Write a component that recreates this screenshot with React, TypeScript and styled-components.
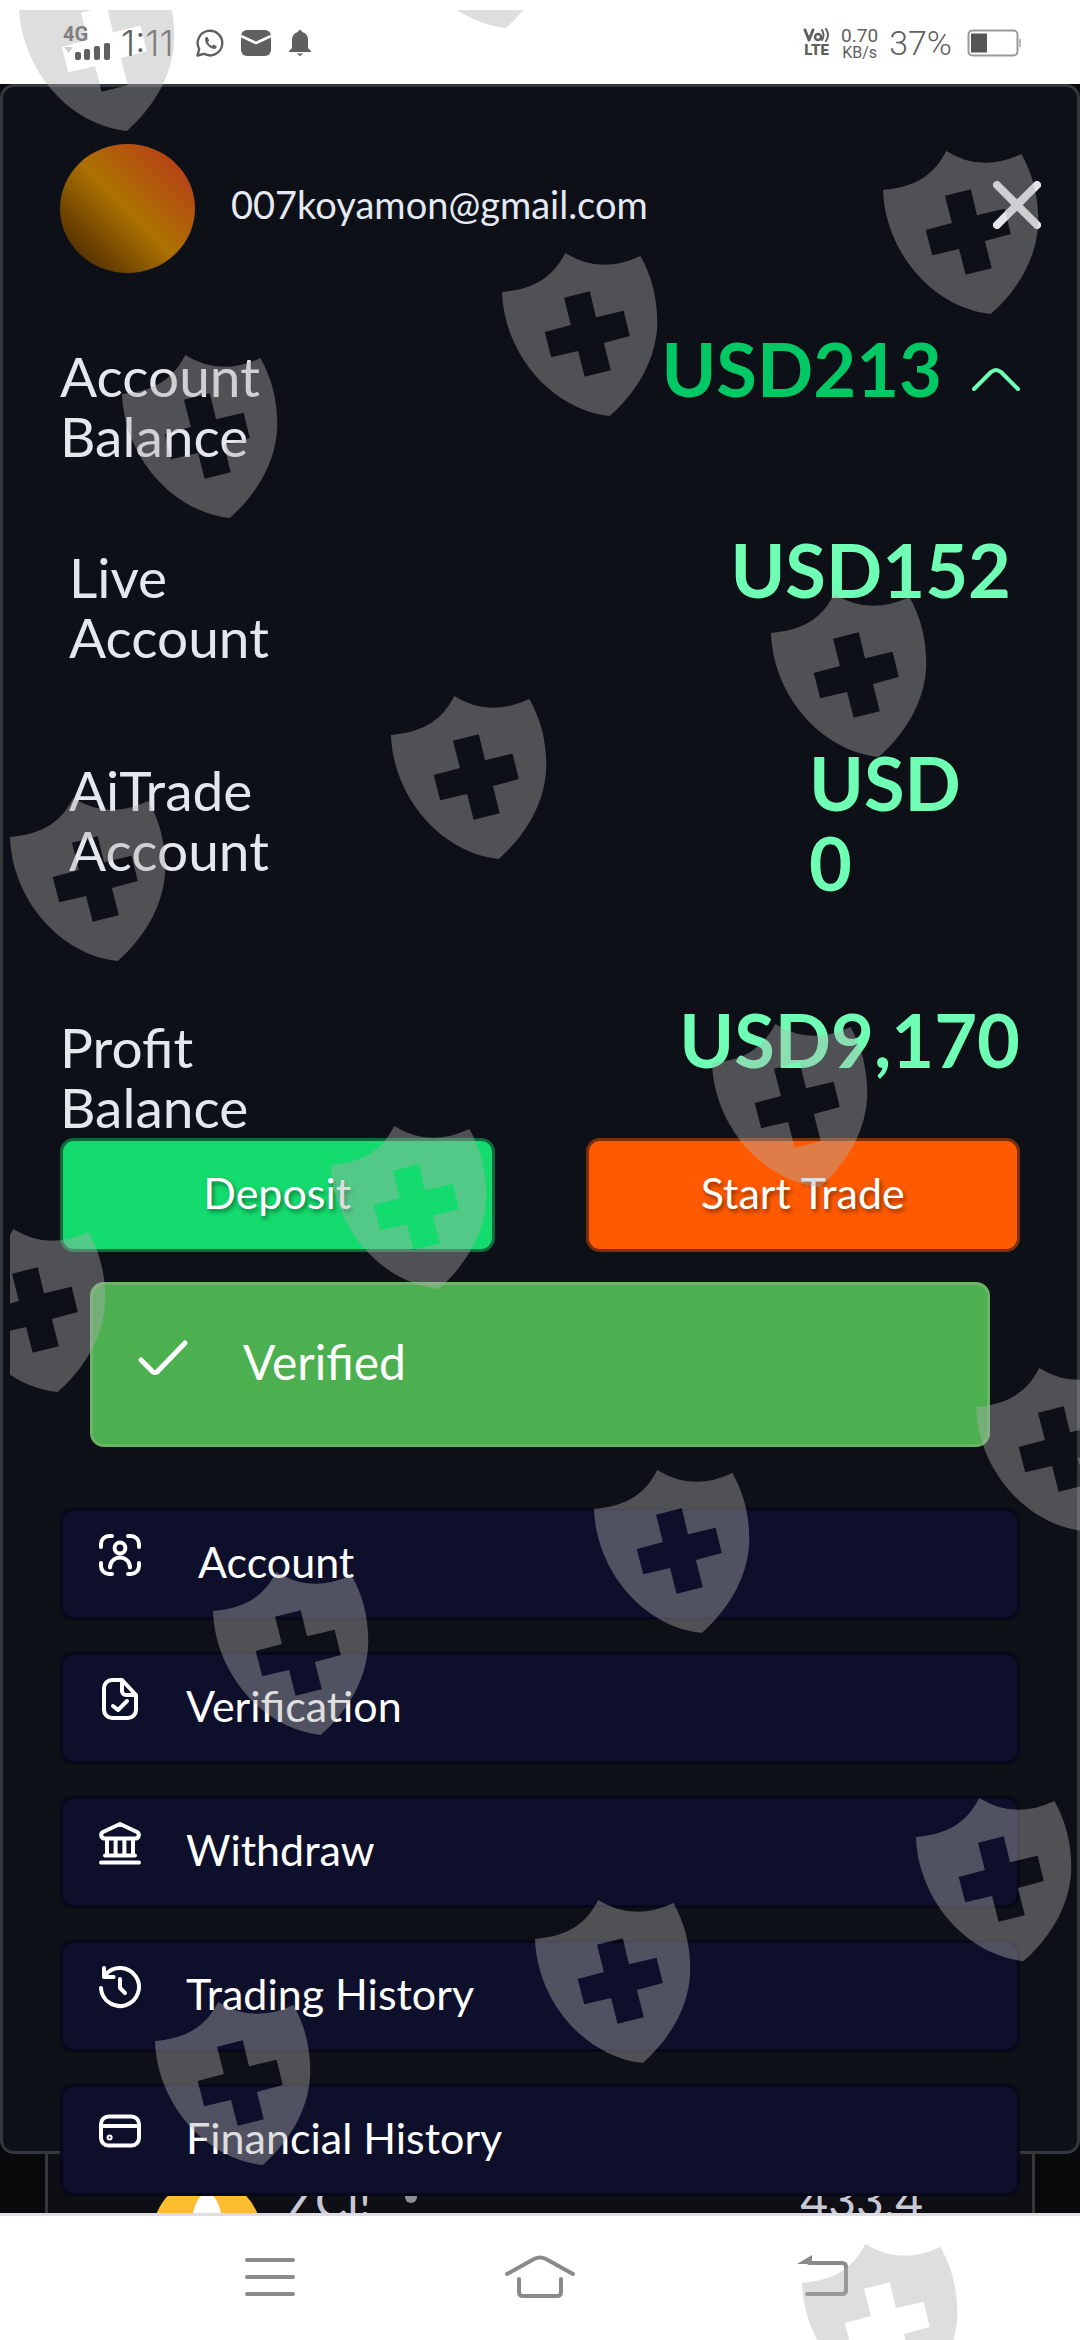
import React from 'react';
import styled, { createGlobalStyle, css } from 'styled-components';

const GlobalStyle = createGlobalStyle`
  *, *::before, *::after { box-sizing: border-box; }
  body { margin: 0; background: #0a0c0f; }
  button { font: inherit; color: inherit; cursor: pointer; }
`;

const Screen = styled.div`
  position: relative;
  display: flex;
  flex-direction: column;
  min-height: 100vh;
  overflow: hidden;
  font-family: Lato, 'Open Sans', sans-serif;
  color: #e4e7ec;
`;

/* ---------- status bar ---------- */

const StatusBar = styled.header`
  display: flex;
  align-items: center;
  justify-content: space-between;
  height: 84px;
  padding: 2px 58px 0 63px;
  background: #fff;
  color: #606060;
  font-family: Roboto, sans-serif;
`;

const StatusGroup = styled.div<{ $gap: number }>`
  display: flex;
  align-items: center;
  gap: ${(p) => p.$gap}px;
`;

const Network = styled.div`
  display: flex;
  flex-direction: column;
  font-size: 20px;
  font-weight: 700;
  line-height: 18px;
  width: 48px;
`;

const Clock = styled.span`
  width: 64px;
  font-family: Inter, sans-serif;
  font-size: 36px;
  font-weight: 300;
  line-height: 40px;
`;

const Charge = styled.span`
  margin-right: 4px;
  font-size: 34px;
  font-weight: 300;
  line-height: 40px;
`;

const Stacked = styled.span<{ $bold?: boolean }>`
  display: flex;
  flex-direction: column;
  align-items: center;
  font-size: 19px;
  line-height: 19px;
  ${(p) => p.$bold && css`
    font-size: 15px;
    font-weight: 900;
    line-height: 16px;
  `}
`;

const Smaller = styled.span`
  font-size: 16px;
  line-height: 16px;
`;

/* ---------- page behind the drawer ---------- */

const Stage = styled.main`
  flex: 1;
  display: grid;
  grid-template-columns: 100%;
  overflow: hidden;
  background: #07090b;
`;

const Backdrop = styled.section`
  grid-area: 1 / 1;
  display: flex;
  flex-direction: column;
  justify-content: flex-end;
  margin: 0 45px;
  border: solid #33363b;
  border-width: 0 3px;
  background: #0d0f15;
`;

const CoinRow = styled.div`
  display: flex;
  align-items: flex-start;
  height: 115px;
  margin-bottom: -74px;
  padding: 0 109px 0 105px;
  font-size: 48px;
  line-height: 56px;
  color: #c9c9d6;

  svg { margin-top: 7px; }
`;

const CoinName = styled.span`
  margin: 0 34px 0 26px;
`;

const CoinDot = styled.span`
  width: 12px;
  height: 12px;
  margin: 19px auto 0 0;
  border-radius: 50%;
  background: #8d8f96;
`;

/* ---------- drawer ---------- */

const Drawer = styled.aside`
  grid-area: 1 / 1;
  align-self: start;
  display: flex;
  flex-direction: column;
  padding: 57px 57px 0;
  border: 3px solid #33383d;
  border-radius: 14px;
  background: #0d1017;
`;

const Profile = styled.div`
  display: flex;
  align-items: center;
  height: 129px;
`;

const Avatar = styled.div`
  width: 135px;
  height: 129px;
  border-radius: 50%;
  background: linear-gradient(45deg, #4f2c00 10%, #ad7200 50%, #b8321f 100%);
`;

const Email = styled.span`
  flex: 1;
  margin: 0 0 9px 36px;
  font-size: 38px;
  line-height: 44px;
  color: #e4e9f3;
`;

const IconButton = styled.button`
  display: flex;
  padding: 0;
  border: 0;
  background: none;
`;

const CloseButton = styled(IconButton)`
  margin: 0 -21px 7px 0;
`;

const Balances = styled.dl`
  display: flex;
  flex-direction: column;
  margin: 56px 0 0;
`;

const Balance = styled.div<{ $gap?: number; $inset?: boolean }>`
  display: flex;
  justify-content: space-between;
  margin-bottom: ${(p) => p.$gap ?? 0}px;
  padding: 0 ${(p) => (p.$inset ? 9 : 0)}px;
`;

const BalanceLabel = styled.dt`
  width: 220px;
  padding-top: 17px;
  font-size: 55px;
  line-height: 60px;
`;

const Amount = styled.dd<{ $strong?: boolean; $narrow?: boolean }>`
  display: flex;
  gap: 30px;
  margin: 0;
  font-size: 74px;
  font-weight: 700;
  line-height: 80px;
  color: ${(p) => (p.$strong ? '#00c864' : '#6fffb4')};
  ${(p) => p.$narrow && css`
    width: 202px;
  `}
`;

const ToggleButton = styled(IconButton)`
  align-items: center;
  align-self: center;
  margin-bottom: 38px;
  height: 24px;
`;

const Actions = styled.div`
  display: flex;
  gap: 91px;
  margin-top: 1px;
`;

const Action = styled.button<{ $fill: string; $edge: string }>`
  flex: 1;
  height: 114px;
  padding: 0 0 4px;
  border: 3px solid ${(p) => p.$edge};
  border-radius: 14px;
  background: ${(p) => p.$fill};
  font-size: 43px;
  line-height: 50px;
  color: #fff;
  text-shadow: 2px 3px 4px rgba(0, 0, 0, 0.45);
`;

const Verified = styled.div`
  display: flex;
  align-items: center;
  gap: 54px;
  height: 165px;
  margin: 30px 30px 61px;
  padding: 0 44px 5px;
  border: 3px solid #69b565;
  border-radius: 14px;
  background: #4cb050;
  font-size: 48px;
  line-height: 56px;
  color: #fff;
`;

const Menu = styled.nav`
  display: flex;
  flex-direction: column;
  gap: 32px;
  margin-bottom: -45px;
`;

const MenuItem = styled.button<{ $indent?: boolean }>`
  display: flex;
  align-items: center;
  gap: ${(p) => (p.$indent ? 54 : 42)}px;
  height: 112px;
  padding: 0 33px 4px;
  border: 3px solid #07071a;
  border-radius: 14px;
  background: #0e102b;
  font-size: 43px;
  line-height: 50px;
  color: #fff;

  svg { margin-bottom: 14px; }
`;

/* ---------- system navigation ---------- */

const SystemNav = styled.nav`
  display: flex;
  justify-content: center;
  height: 127px;
  border-top: 3px solid #dfdde4;
  background: #fff;
`;

const NavButton = styled(IconButton)`
  flex: 0 0 25%;
  align-items: center;
  justify-content: center;
  padding-bottom: 2px;
`;

/* ---------- floating shields ---------- */

const ShieldLayer = styled.div`
  position: absolute;
  inset: 10px 0 0 10px;
  overflow: hidden;
  pointer-events: none;
`;

const Shield = styled.svg<{ $x: number; $y: number }>`
  position: absolute;
  left: ${(p) => p.$x - 10}px;
  top: ${(p) => p.$y - 50}px;
  width: 156px;
  height: 166px;
`;

const shields: [number, number][] = [
  [19, 7], [398, -96],
  [883, 190], [502, 292], [122, 394],
  [771, 633], [391, 735], [10, 837],
  [712, 1063], [331, 1165], [-50, 1268],
  [976, 1407], [594, 1509], [213, 1611],
  [916, 1837], [535, 1939], [155, 2041],
  [802, 2283],
];

const line = {
  fill: 'none',
  stroke: 'currentColor',
  strokeWidth: 2,
  strokeLinecap: 'round' as const,
  strokeLinejoin: 'round' as const,
};

const MenuIcon = ({ children }: { children: React.ReactNode }) => (
  <svg width="48" height="48" viewBox="0 0 24 24" {...line} aria-hidden="true">{children}</svg>
);

const menu = [
  {
    label: 'Account',
    indent: true,
    icon: (
      <>
        <path d="M2.500 8V6.500a4 4 0 0 1 4-4H8M16 2.500h1.500a4 4 0 0 1 4 4V8M21.500 16v1.500a4 4 0 0 1-4 4H16M8 21.500H6.500a4 4 0 0 1-4-4V16" />
        <circle cx="12" cy="8.500" r="2.700" />
        <path d="M7 18.200a5 5 0 0 1 10 0" />
      </>
    ),
  },
  {
    label: 'Verification',
    icon: (
      <>
        <path d="M13 2.500H8A4 4 0 0 0 4 6.500v11a4 4 0 0 0 4 4h8a4 4 0 0 0 4-4V10zM13 2.500V8a2 2 0 0 0 2 2h5" />
        <path d="M8.500 15.500l2.500 2 4.500-4.500" />
      </>
    ),
  },
  {
    label: 'Withdraw',
    icon: (
      <>
        <path d="M12 2.500l8.500 4a1.700 1.700 0 0 1-.7 3.200H4.200a1.700 1.700 0 0 1-.7-3.200z" />
        <path d="M5.500 10v8M9.800 10v8M14.200 10v8M18.500 10v8M4.500 18.200h15M2.500 21.700h19" />
      </>
    ),
  },
  {
    label: 'Trading History',
    icon: (
      <>
        <path d="M4.800 5.800A9.500 9.500 0 1 1 2.500 12.500" />
        <path d="M4 2.500V7h4.800M12 8v4.500l2.500 2.500" />
      </>
    ),
  },
  {
    label: 'Financial History',
    icon: (
      <>
        <rect x="2.500" y="4.700" width="19" height="14.600" rx="3.800" />
        <path d="M3 9.500h18" />
        <circle cx="6.800" cy="15.300" r=".5" />
      </>
    ),
  },
];

export default function App() {
  return (
    <Screen>
      <GlobalStyle />

      <StatusBar>
        <StatusGroup $gap={10}>
          <Network>
            4G
            <svg width="48" height="18" viewBox="0 0 48 18" fill="#606060" aria-hidden="true">
              <path d="M1 4h9l-4.500 6z" fill="#cfcfcf" />
              <rect x="12" y="9" width="6" height="8" rx="2" />
              <rect x="21" y="6" width="6" height="11" rx="2" />
              <rect x="31" y="3" width="6" height="14" rx="2" />
              <rect x="41" y="0" width="6" height="17" rx="2" />
            </svg>
          </Network>
          <Clock>1:11</Clock>
          <StatusGroup $gap={16}>
            <svg width="30" height="30" viewBox="0 0 30 30" {...line} strokeWidth={2.4} aria-hidden="true">
              <path d="M2.500 27.500l1.700-6.500A12.300 12.300 0 1 1 9 25.800z" />
              <path d="M11 9c-3 2 1 11 8 12 2 0 3-2 2.500-3l-3-1.500-1.500 1.500c-2-.8-3.200-2-4-4l1.200-1.500L12.500 9z" fill="currentColor" stroke="none" />
            </svg>
            <svg width="30" height="26" viewBox="0 0 30 26" aria-hidden="true">
              <rect width="30" height="26" rx="6" fill="#606060" />
              <path d="M0 6l15 7 15-7" fill="none" stroke="#fff" strokeWidth="2.500" />
            </svg>
            <svg width="26" height="26" viewBox="-2 0 26 26" fill="#606060" aria-hidden="true">
              <path d="M11 0c1.500 0 2 1 2 2 4 1 6 4 6 8v8l3 3v1H0v-1l3-3v-8c0-4 2-7 6-8 0-1 .5-2 2-2zM7.500 23.500h7L11 26z" />
            </svg>
          </StatusGroup>
        </StatusGroup>
        <StatusGroup $gap={11}>
          <Stacked $bold>
            <svg width="27" height="14" viewBox="0 0 27 14" {...line} aria-hidden="true">
              <path d="M2 2l4 10 4-10" strokeWidth="3" />
              <circle cx="15" cy="9" r="3" strokeWidth="2.500" />
              <path d="M19 2q3 5 0 10M23 1q4 6 0 12" />
            </svg>
            <span>LTE</span>
          </Stacked>
          <Stacked>
            <span>0.70</span>
            <Smaller>KB/s</Smaller>
          </Stacked>
          <Charge>37%</Charge>
          <svg width="55" height="28" viewBox="0 0 55 28" aria-hidden="true">
            <rect x="1.500" y="1.500" width="49" height="25" rx="4" fill="none" stroke="#9a9a9a" strokeWidth="2" />
            <rect x="4" y="4.500" width="16" height="19" fill="#555" />
            <rect x="52" y="10" width="2" height="8" fill="#bbb" />
          </svg>
        </StatusGroup>
      </StatusBar>

      <Stage>
        <Backdrop>
          <CoinRow>
            <svg width="108" height="108" viewBox="0 0 108 108" aria-hidden="true">
              <circle cx="54" cy="54" r="54" fill="#fbbd2e" />
              <ellipse cx="54" cy="52" rx="16" ry="38" fill="#fff" />
            </svg>
            <CoinName>ZCl!</CoinName>
            <CoinDot />
            <span>433.4</span>
          </CoinRow>
        </Backdrop>

        <Drawer>
          <Profile>
            <Avatar />
            <Email>007koyamon@gmail.com</Email>
            <CloseButton aria-label="Close">
              <svg width="48" height="48" viewBox="0 0 48 48" {...line} strokeWidth={8} stroke="#e6e6ea">
                <path d="M4 4l40 40M44 4L4 44" />
              </svg>
            </CloseButton>
          </Profile>

          <Balances>
            <Balance $gap={64}>
              <BalanceLabel>Account Balance</BalanceLabel>
              <Amount $strong>
                USD213
                <ToggleButton aria-label="Hide accounts">
                  <svg width="48" height="24" viewBox="0 0 48 24" {...line} stroke="#6fffb4" strokeWidth={4}>
                    <path d="M2 22L19 5q5-4 10 0L46 22" />
                  </svg>
                </ToggleButton>
              </Amount>
            </Balance>
            <Balance $gap={76} $inset>
              <BalanceLabel>Live Account</BalanceLabel>
              <Amount>USD152</Amount>
            </Balance>
            <Balance $gap={97} $inset>
              <BalanceLabel>AiTrade Account</BalanceLabel>
              <Amount $narrow>USD 0</Amount>
            </Balance>
            <Balance>
              <BalanceLabel>Profit Balance</BalanceLabel>
              <Amount>USD9,170</Amount>
            </Balance>
          </Balances>

          <Actions>
            <Action $fill="#14db6e" $edge="#0e6a3c">Deposit</Action>
            <Action $fill="#ff5a00" $edge="#7a300a">Start Trade</Action>
          </Actions>

          <Verified>
            <svg width="52" height="52" viewBox="0 0 52 52" {...line} strokeWidth={5}>
              <path d="M4 24l12 12q2 1 4 0L48 7" />
            </svg>
            Verified
          </Verified>

          <Menu>
            {menu.map((item) => (
              <MenuItem key={item.label} $indent={item.indent}>
                <MenuIcon>{item.icon}</MenuIcon>
                {item.label}
              </MenuItem>
            ))}
          </Menu>
        </Drawer>
      </Stage>

      <SystemNav>
        <NavButton aria-label="Recent apps">
          <svg width="52" height="44" viewBox="0 0 52 44" {...line} stroke="#8a8a8a" strokeWidth={4}>
            <path d="M3 5h46M3 22h46M3 39h46" />
          </svg>
        </NavButton>
        <NavButton aria-label="Home">
          <svg width="72" height="44" viewBox="0 0 72 44" {...line} stroke="#8a8a8a" strokeWidth={4}>
            <path d="M3 19L30 4q6-3 12 0l27 15M15 24v13q0 4 4 4h34q4 0 4-4V24" />
          </svg>
        </NavButton>
        <NavButton aria-label="Back">
          <svg width="76" height="44" viewBox="0 0 76 44" {...line} stroke="#8a8a8a" strokeWidth={4}>
            <path d="M37 8h33q4 0 4 4v23q0 4-4 4H35" />
            <path d="M25 9L40 0v9z" fill="#8a8a8a" stroke="none" />
          </svg>
        </NavButton>
      </SystemNav>

      <ShieldLayer aria-hidden="true">
        {shields.map(([x, y]) => (
          <Shield key={`${x}-${y}`} $x={x} $y={y} viewBox="0 -40 156 166">
            <path
              fill="rgba(176, 176, 176, 0.41)"
              fillRule="evenodd"
              d="M0 0C35-3 52-17 63.300-39Q98-17 138.400-36C150-15 155 5 155.300 30C155 65 137 98 107.800 124C50 118 2 62 0 0ZM62 5.700L87.800-.7L94 25.300L121.600 18.700L127.800 44L101.900 51L108.800 78.300L82.600 84.700L76.100 59L49.200 65.300L42.700 40L68.900 33Z"
            />
          </Shield>
        ))}
      </ShieldLayer>
    </Screen>
  );
}
